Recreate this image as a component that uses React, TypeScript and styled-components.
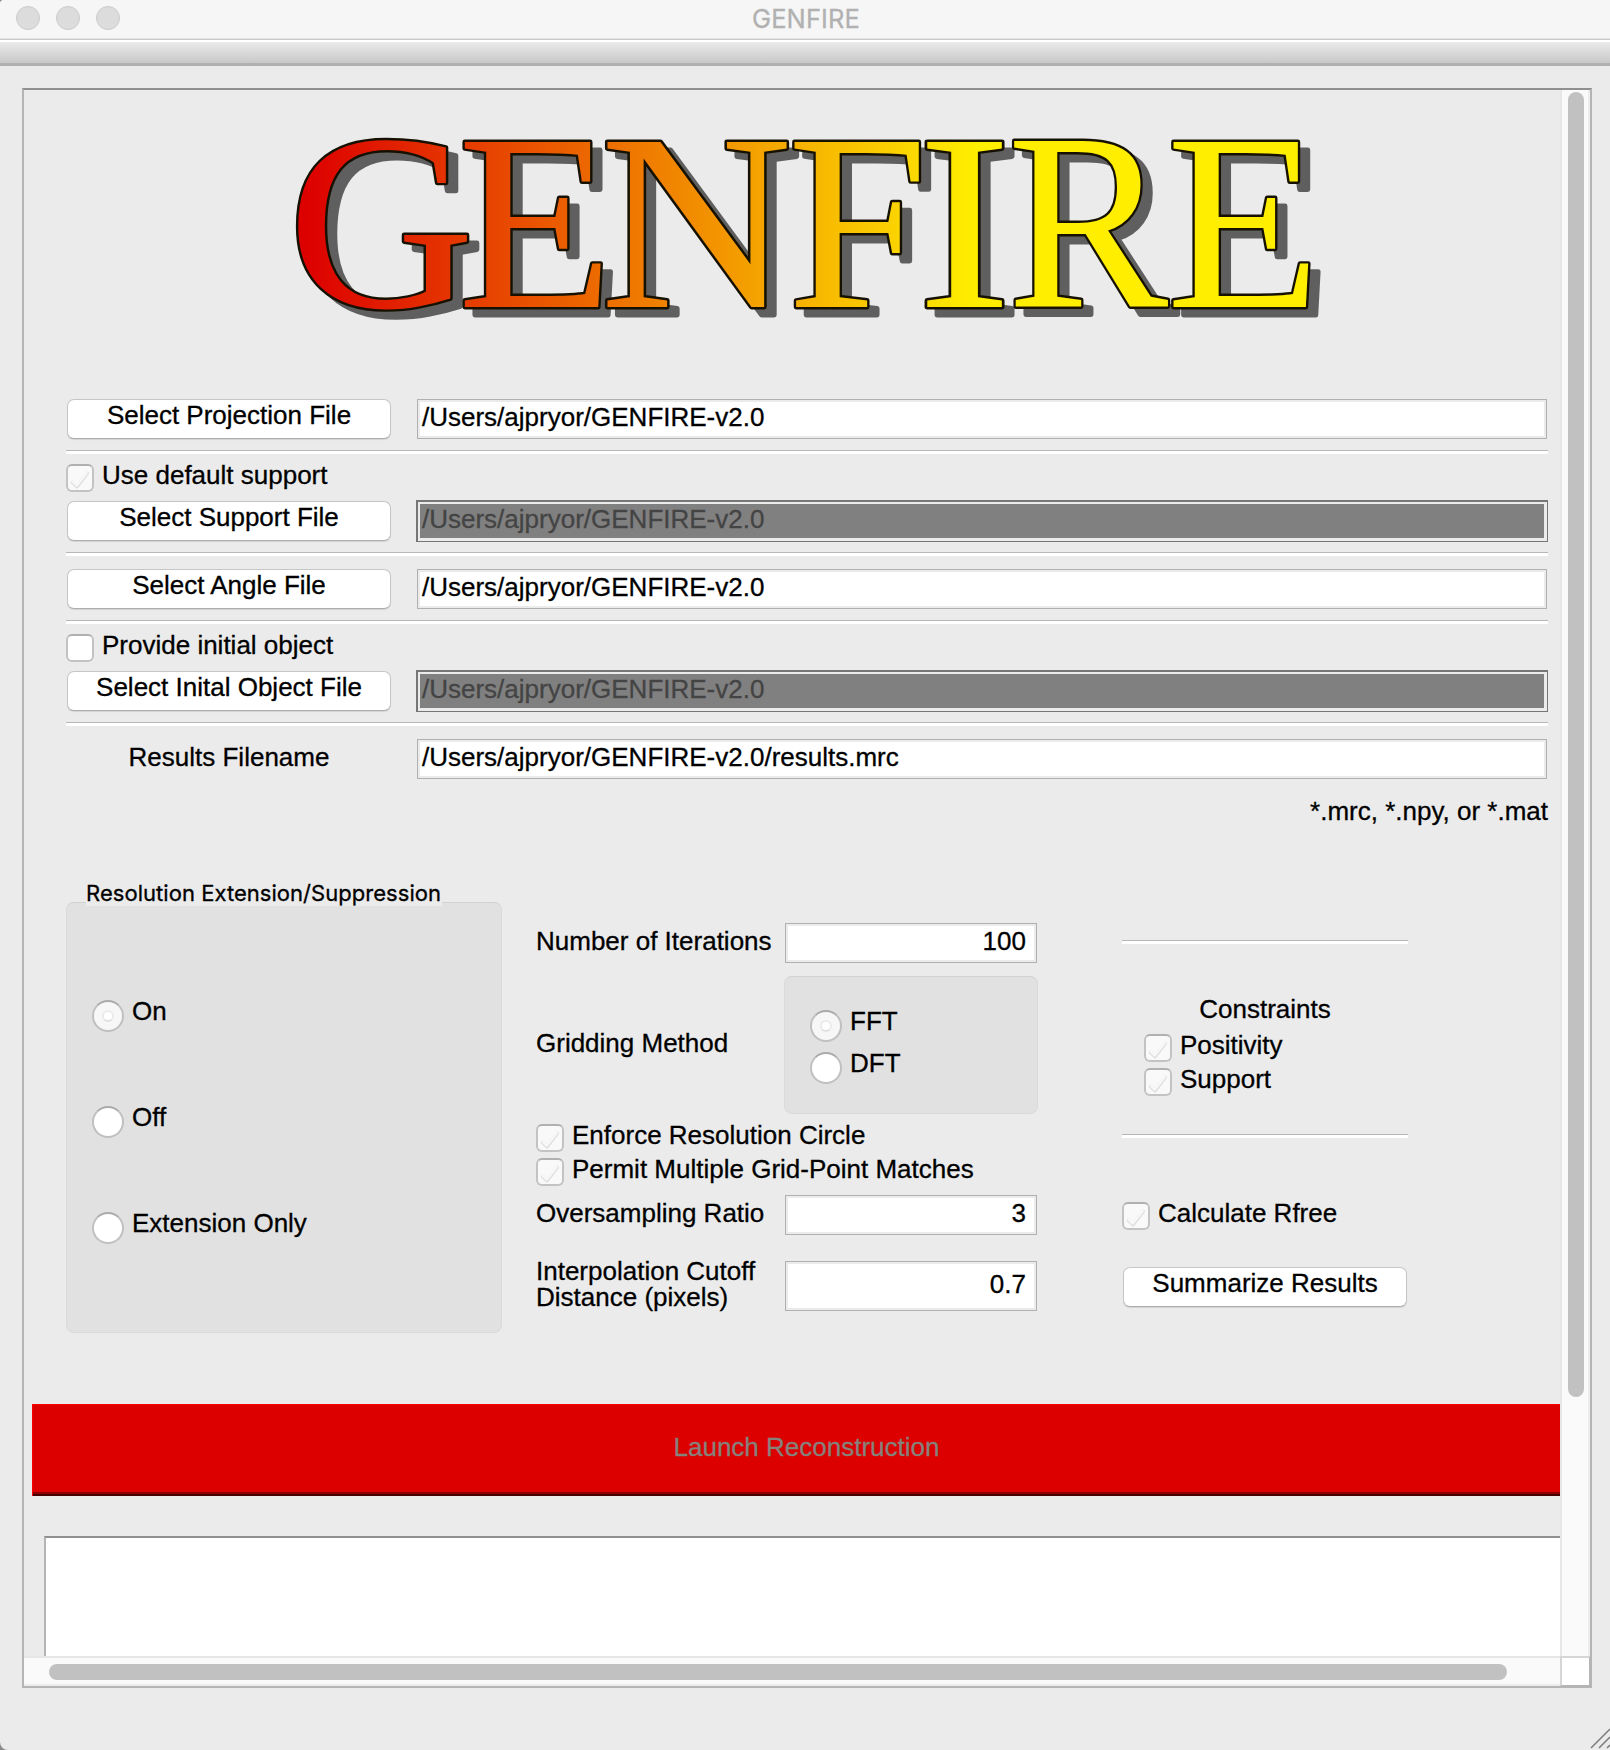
import React from "react";
import styled, { createGlobalStyle, css } from "styled-components";

const GlobalStyle = createGlobalStyle`
  * { box-sizing: border-box; }
  html, body { margin: 0; padding: 0; background: #8c8c8c; }
  body { overflow: hidden; }
`;

const Window = styled.div`
  display: flex;
  flex-direction: column;
  position: relative;
  width: 1610px;
  height: 1750px;
  overflow: hidden;
  background: #ebebeb;
  border-radius: 4px 0 0 8px;
  color: #000;
  font: 26px/30px "Liberation Sans", Arial, sans-serif;
  white-space: nowrap;
  -webkit-text-stroke-width: 0.3px;
`;

const TitleBar = styled.header`
  display: grid;
  grid-template-columns: 1fr auto 1fr;
  align-items: center;
  height: 40px;
  padding: 0 16px 3px;
  background: #f6f6f6;
  border-bottom: 1px solid #c9c9c9;
  box-shadow: inset 0 -1px 0 #e4e4e4;
`;

const Lights = styled.div`
  display: flex;
  gap: 16px;
`;

const Light = styled.span`
  width: 24px;
  height: 24px;
  border-radius: 50%;
  background: #dcdcdc;
  border: 1px solid #cbcbcb;
`;

const WindowTitle = styled.div`
  padding: 2px 0 0 2px;
  font: 25.5px/30px Inter, sans-serif;
  letter-spacing: 0.1px;
  color: #b1b1b1;
`;

const ToolStrip = styled.div`
  height: 26px;
  border-top: 2px solid #fff;
  border-bottom: 3px solid #b0b0b0;
  background: linear-gradient(#eaeaea, #c8c8c8);
`;

const ScrollFrame = styled.main`
  display: grid;
  grid-template-columns: 1536px 30px;
  grid-template-rows: 1566px 30px;
  width: 1570px;
  height: 1600px;
  margin: 22px 0 0 22px;
  border: 2px solid #b5b5b5;
  border-top-color: #8f8f8f;
`;

const Viewport = styled.div`
  overflow: hidden;
`;

const VerticalBar = styled.div`
  padding: 2px 4px 0 6px;
  background: #fafafa;
  border-left: 2px solid #e7e7e7;
  border-right: 2px solid #ededed;
`;

const HorizontalBar = styled.div`
  padding: 6px 0 4px 25px;
  background: #fafafa;
  border-top: 2px solid #e7e7e7;
  border-bottom: 2px solid #ededed;
`;

const Thumb = styled.div<{ $w: number; $h: number }>`
  width: ${(p) => p.$w}px;
  height: ${(p) => p.$h}px;
  border-radius: 8px;
  background: #c1c1c1;
`;

const Corner = styled.div`
  background: #fff;
  border: 2px solid #d6d6d6;
  border-right: 1px solid #b5b5b5;
  border-bottom: 1px solid #b5b5b5;
`;

const Logo = styled.svg`
  display: block;
  width: 1536px;
  height: 308px;
  overflow: visible;
  font-family: "Liberation Serif", "Times New Roman", serif;
  font-size: 252px;
`;

const LogoWord = styled.g`
  stroke: #151000;
  stroke-width: 4.8px;
  stroke-linejoin: round;
  paint-order: stroke;
  filter: drop-shadow(10px 8px 0 #5f5f5f);
`;

const Form = styled.section`
  width: 1482px;
  margin-left: 42px;
`;

const FileRow = styled.div<{ $top?: number }>`
  display: grid;
  grid-template-columns: 326px 1132px;
  column-gap: 24px;
  height: 42px;
  margin-top: ${(p) => p.$top ?? 0}px;
`;

const Rule = styled.hr<{ $top?: number; $bottom?: number }>`
  height: 4px;
  margin: ${(p) => p.$top ?? 10}px 0 ${(p) => p.$bottom ?? 0}px;
  border: 0;
  border-top: 1px solid #b7b7b7;
  background: #fff;
`;

const PushButton = styled.button`
  display: flex;
  justify-content: center;
  height: 40px;
  margin: 1px;
  padding: 0;
  border: 1px solid #c6c6c6;
  border-bottom-color: #adadad;
  border-radius: 7px;
  background: #fff;
  box-shadow: 0 1px 1px rgba(0, 0, 0, 0.1);
  font: inherit;
  color: inherit;
`;

const Field = styled.div<{ $off?: boolean; $numeric?: boolean }>`
  display: flex;
  align-items: center;
  justify-content: ${(p) => (p.$numeric ? "flex-end" : "flex-start")};
  margin: 1px;
  padding: ${(p) => (p.$numeric ? "0 10px 4px 0" : "0 0 4px 4px")};
  border: 1px solid #b0b0b0;
  background: #fff;
  box-shadow: inset 0 0 0 2px #ebebeb;
  ${(p) =>
    p.$off &&
    css`
      margin: 0;
      padding-bottom: 5px;
      border: 2px solid #767676;
      border-right-width: 1px;
      border-bottom-width: 1px;
      background: #808080;
      box-shadow: inset 0 0 0 2px #ebebeb, inset -3px -3px 0 #ebebeb;
      color: #444;
    `}
`;

const Caption = styled.div`
  padding-top: 4px;
  text-align: center;
`;

const Hint = styled.div`
  margin-top: 16px;
  text-align: right;
`;

const Option = styled.label<{ $top?: number; $left?: number }>`
  display: flex;
  align-items: flex-start;
  gap: 8px;
  height: 28px;
  margin: ${(p) => p.$top ?? 0}px 0 0 ${(p) => p.$left ?? 0}px;
`;

const RadioOption = styled(Option)`
  height: 32px;
`;

const OptionText = styled.span`
  margin-top: -4px;
`;

const Box = styled.span<{ $on?: boolean }>`
  flex: none;
  width: 28px;
  height: 28px;
  border: 2px solid #c3c3c3;
  border-top-color: #b0b0b0;
  border-radius: 6px;
  background: ${(p) => (p.$on ? "#f9f9f9" : "#fff")};
`;

const Mark = styled.svg`
  display: block;
  width: 24px;
  height: 24px;
  fill: none;
  stroke-linecap: round;
  stroke-linejoin: round;
`;

const Dot = styled.span<{ $on?: boolean }>`
  display: grid;
  place-items: center;
  flex: none;
  width: 32px;
  height: 32px;
  border: 2px solid #c0c0c0;
  border-top-color: #aaa;
  border-radius: 50%;
  background: ${(p) => (p.$on ? "#f7f7f7" : "#fff")};
`;

const DotCore = styled.span`
  width: 12px;
  height: 12px;
  border: 2px solid #ebebeb;
  border-bottom-color: #e0e0e0;
  border-radius: 50%;
  background: #fff;
`;

const Settings = styled.div`
  display: flex;
  height: 453px;
  margin-top: 54px;
`;

const GroupColumn = styled.div`
  display: flex;
  flex-direction: column;
  width: 436px;
`;

const GroupTitle = styled.div`
  align-self: flex-start;
  z-index: 1;
  width: 356px;
  height: 26px;
  margin: 0 0 -4px 20px;
  background: #ebebeb;
  font: 22px/26px Inter, sans-serif;
  letter-spacing: 0.04px;
`;

const GroupBox = styled.div<{ $pad: string; $gap: number }>`
  display: flex;
  flex: 1;
  flex-direction: column;
  gap: ${(p) => p.$gap}px;
  padding: ${(p) => p.$pad};
  border: 1px solid #dadada;
  border-top-color: #d2d2d2;
  border-radius: 8px;
  background: #e1e1e1;
`;

const MiddleColumn = styled.div`
  width: 502px;
  margin-left: 34px;
  padding-top: 42px;
`;

const ParamRow = styled.div<{ $h: number; $top?: number }>`
  display: grid;
  grid-template-columns: 248px 254px;
  height: ${(p) => p.$h}px;
  margin-top: ${(p) => p.$top ?? 0}px;
`;

const ParamLabel = styled.div<{ $top?: number; $line?: number }>`
  margin-top: ${(p) => p.$top ?? 4}px;
  line-height: ${(p) => p.$line ?? 30}px;
`;

const RightColumn = styled.div`
  display: flex;
  flex-direction: column;
  width: 286px;
  margin-left: 84px;
`;

const ConstraintsTitle = styled.div`
  margin-bottom: 10px;
  text-align: center;
`;

const SummarySlot = styled.div`
  display: grid;
  margin-top: 36px;
`;

const LaunchButton = styled.button`
  display: block;
  width: 1549px;
  height: 92px;
  margin: 71px 0 0 8px;
  padding: 0 0 6px;
  border: 0;
  background: #dc0000;
  box-shadow: inset 1px 1px 0 #ff0000, inset 0 -2px 0 #460000, inset 0 -4px 0 #8e0000;
  font: inherit;
  color: #87817c;
`;

const LogPane = styled.div`
  width: 1560px;
  height: 300px;
  margin: 40px 0 0 20px;
  border-top: 2px solid #8f8f8f;
  border-left: 2px solid #b5b5b5;
  background: #fff;
`;

const Grip = styled.svg`
  position: absolute;
  right: 0;
  bottom: 0;
  width: 20px;
  height: 22px;
  stroke: #7a7a7a;
  stroke-width: 1.5;
`;

const letters = [
  { ch: "G", x: 287.7, sx: 1.029 },
  { ch: "E", x: 457.6, sx: 1.012 },
  { ch: "N", x: 599.8, sx: 1.06 },
  { ch: "F", x: 787.2, sx: 1.003 },
  { ch: "I", x: 917, sx: 1.13 },
  { ch: "R", x: 1007.2, sx: 0.958 },
  { ch: "E", x: 1166.2, sx: 1.004 },
];

/* One flame runs across the word; each letter gets it in its own scaled space. */
const FLAME_START = 306;
const FLAME_END = 975;

function GenfireLogo() {
  return (
    <Logo viewBox="24 90 1536 308">
      <defs>
        {letters.map((l, i) => (
          <linearGradient
            key={i}
            id={`flame-${i}`}
            gradientUnits="userSpaceOnUse"
            x1={(FLAME_START - l.x) / l.sx}
            y1="0"
            x2={(FLAME_END - l.x) / l.sx}
            y2="0"
          >
            <stop offset="0" stopColor="#dd0000" />
            <stop offset="0.5" stopColor="#ef7a00" />
            <stop offset="1" stopColor="#ffee00" />
          </linearGradient>
        ))}
      </defs>
      <LogoWord>
        {letters.map((l, i) => (
          <text key={i} fill={`url(#flame-${i})`} transform={`translate(${l.x} 307) scale(${l.sx} 1)`}>
            {l.ch}
          </text>
        ))}
      </LogoWord>
    </Logo>
  );
}

function Check({ text, on, top, left }: { text: string; on?: boolean; top?: number; left?: number }) {
  return (
    <Option $top={top} $left={left}>
      <Box $on={on}>
        {on && (
          <Mark viewBox="0 0 24 24">
            <path d="M4.5 16.2L9 20.7L19.2 7.5" stroke="#dfdfdf" strokeWidth="3.6" />
            <path d="M4.5 15.4L8.8 19.6L18.8 7" stroke="#f8f8f8" strokeWidth="2.2" />
          </Mark>
        )}
      </Box>
      <OptionText>{text}</OptionText>
    </Option>
  );
}

function Radio({ text, on }: { text: string; on?: boolean }) {
  return (
    <RadioOption>
      <Dot $on={on}>{on && <DotCore />}</Dot>
      <OptionText>{text}</OptionText>
    </RadioOption>
  );
}

const home = "/Users/ajpryor/GENFIRE-v2.0";

export default function App() {
  return (
    <>
      <GlobalStyle />
      <Window>
        <TitleBar>
          <Lights>
            <Light />
            <Light />
            <Light />
          </Lights>
          <WindowTitle>GENFIRE</WindowTitle>
        </TitleBar>
        <ToolStrip />
        <ScrollFrame>
          <Viewport>
            <GenfireLogo />
            <Form>
              <FileRow>
                <PushButton>Select Projection File</PushButton>
                <Field>{home}</Field>
              </FileRow>
              <Rule />
              <Check text="Use default support" on top={10} />
              <FileRow $top={8}>
                <PushButton>Select Support File</PushButton>
                <Field $off>{home}</Field>
              </FileRow>
              <Rule $bottom={12} />
              <FileRow>
                <PushButton>Select Angle File</PushButton>
                <Field>{home}</Field>
              </FileRow>
              <Rule />
              <Check text="Provide initial object" top={10} />
              <FileRow $top={8}>
                <PushButton>Select Inital Object File</PushButton>
                <Field $off>{home}</Field>
              </FileRow>
              <Rule $bottom={12} />
              <FileRow>
                <Caption>Results Filename</Caption>
                <Field>{home + "/results.mrc"}</Field>
              </FileRow>
              <Hint>*.mrc, *.npy, or *.mat</Hint>
              <Settings>
                <GroupColumn>
                  <GroupTitle>Resolution Extension/Suppression</GroupTitle>
                  <GroupBox $pad="97px 0 0 25px" $gap={74}>
                    <Radio text="On" on />
                    <Radio text="Off" />
                    <Radio text="Extension Only" />
                  </GroupBox>
                </GroupColumn>
                <MiddleColumn>
                  <ParamRow $h={42}>
                    <ParamLabel>Number of Iterations</ParamLabel>
                    <Field $numeric>100</Field>
                  </ParamRow>
                  <ParamRow $h={138} $top={12}>
                    <ParamLabel $top={52}>Gridding Method</ParamLabel>
                    <GroupBox $pad="33px 0 0 25px" $gap={10}>
                      <Radio text="FFT" on />
                      <Radio text="DFT" />
                    </GroupBox>
                  </ParamRow>
                  <Check text="Enforce Resolution Circle" on top={10} />
                  <Check text="Permit Multiple Grid-Point Matches" on top={6} />
                  <ParamRow $h={42} $top={8}>
                    <ParamLabel>Oversampling Ratio</ParamLabel>
                    <Field $numeric>3</Field>
                  </ParamRow>
                  <ParamRow $h={52} $top={24}>
                    <ParamLabel $top={-2} $line={26}>
                      Interpolation Cutoff
                      <br />
                      Distance (pixels)
                    </ParamLabel>
                    <Field $numeric>0.7</Field>
                  </ParamRow>
                </MiddleColumn>
                <RightColumn>
                  <Rule $top={60} $bottom={50} />
                  <ConstraintsTitle>Constraints</ConstraintsTitle>
                  <Check text="Positivity" on left={22} />
                  <Check text="Support" on top={6} left={22} />
                  <Rule $top={38} $bottom={64} />
                  <Check text="Calculate Rfree" on />
                  <SummarySlot>
                    <PushButton>Summarize Results</PushButton>
                  </SummarySlot>
                </RightColumn>
              </Settings>
            </Form>
            <LaunchButton>Launch Reconstruction</LaunchButton>
            <LogPane />
          </Viewport>
          <VerticalBar>
            <Thumb $w={16} $h={1305} />
          </VerticalBar>
          <HorizontalBar>
            <Thumb $w={1458} $h={16} />
          </HorizontalBar>
          <Corner />
        </ScrollFrame>
        <Grip viewBox="0 0 20 22">
          <path d="M1 20L20 1M9 20L20 9M17 20L20 17" fill="none" />
        </Grip>
      </Window>
    </>
  );
}
